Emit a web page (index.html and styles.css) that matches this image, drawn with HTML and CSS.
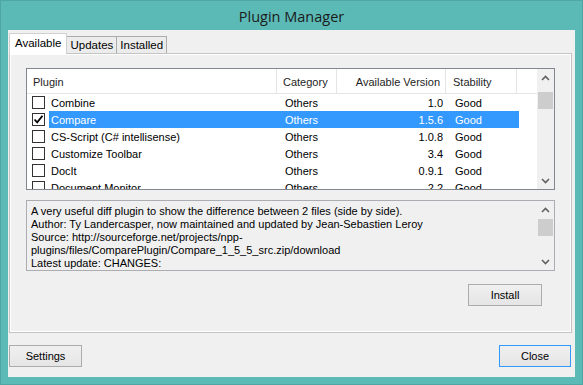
FILE: index.html
```html
<!DOCTYPE html>
<html>

<head>
    <title>Plugin Manager</title>
    <meta charset="utf-8">
    <link rel="stylesheet" href="styles.css">
</head>

<body>
    <div class="window">
        <div class="titlebar">Plugin Manager</div>

        <div class="client">
            <div class="tabs">
                <div class="tab tab-active">Available</div>
                <div class="tab">Updates</div>
                <div class="tab">Installed</div>
            </div>

            <div class="tab-page">
                <!-- plugin list -->
                <div class="listview">
                    <div class="lv-body">
                        <div class="lv-header">
                            <div class="col col-plugin">Plugin</div>
                            <div class="col col-category">Category</div>
                            <div class="col col-version">Available Version</div>
                            <div class="col col-stability">Stability</div>
                        </div>

                        <div class="lv-row">
                            <span class="check"></span>
                            <div class="row-cells">
                                <div class="cell cell-name">Combine</div>
                                <div class="cell col-category">Others</div>
                                <div class="cell col-version">1.0</div>
                                <div class="cell col-stability">Good</div>
                            </div>
                        </div>
                        <div class="lv-row selected">
                            <span class="check checked">
                                <svg width="11" height="11" viewBox="0 0 11 11"><path d="M1.5 5.5 L4.2 8.3 L9.5 1.8" fill="none" stroke="#000" stroke-width="1.8"/></svg>
                            </span>
                            <div class="row-cells">
                                <div class="cell cell-name">Compare</div>
                                <div class="cell col-category">Others</div>
                                <div class="cell col-version">1.5.6</div>
                                <div class="cell col-stability">Good</div>
                            </div>
                        </div>
                        <div class="lv-row">
                            <span class="check"></span>
                            <div class="row-cells">
                                <div class="cell cell-name">CS-Script (C# intellisense)</div>
                                <div class="cell col-category">Others</div>
                                <div class="cell col-version">1.0.8</div>
                                <div class="cell col-stability">Good</div>
                            </div>
                        </div>
                        <div class="lv-row">
                            <span class="check"></span>
                            <div class="row-cells">
                                <div class="cell cell-name">Customize Toolbar</div>
                                <div class="cell col-category">Others</div>
                                <div class="cell col-version">3.4</div>
                                <div class="cell col-stability">Good</div>
                            </div>
                        </div>
                        <div class="lv-row">
                            <span class="check"></span>
                            <div class="row-cells">
                                <div class="cell cell-name">DocIt</div>
                                <div class="cell col-category">Others</div>
                                <div class="cell col-version">0.9.1</div>
                                <div class="cell col-stability">Good</div>
                            </div>
                        </div>
                        <div class="lv-row">
                            <span class="check"></span>
                            <div class="row-cells">
                                <div class="cell cell-name">Document Monitor</div>
                                <div class="cell col-category">Others</div>
                                <div class="cell col-version">2.2</div>
                                <div class="cell col-stability">Good</div>
                            </div>
                        </div>
                    </div>

                    <div class="scrollbar">
                        <div class="sb-arrow">
                            <svg width="9" height="6" viewBox="0 0 9 6"><path d="M1 5 L4.5 1.5 L8 5" fill="none" stroke="#606060" stroke-width="1.6"/></svg>
                        </div>
                        <div class="sb-track">
                            <div class="sb-thumb list-thumb"></div>
                        </div>
                        <div class="sb-arrow">
                            <svg width="9" height="6" viewBox="0 0 9 6"><path d="M1 1 L4.5 4.5 L8 1" fill="none" stroke="#606060" stroke-width="1.6"/></svg>
                        </div>
                    </div>
                </div>

                <!-- description of selected plugin -->
                <div class="desc">
                    <div class="desc-text">
                        A very useful diff plugin to show the difference between 2 files (side by side).<br>
                        Author: Ty Landercasper, now maintained and updated by Jean-Sebastien Leroy<br>
                        Source: http://sourceforge.net/projects/npp-<br>
                        plugins/files/ComparePlugin/Compare_1_5_5_src.zip/download<br>
                        Latest update: CHANGES:
                    </div>
                    <div class="scrollbar">
                        <div class="sb-arrow">
                            <svg width="9" height="6" viewBox="0 0 9 6"><path d="M1 5 L4.5 1.5 L8 5" fill="none" stroke="#606060" stroke-width="1.6"/></svg>
                        </div>
                        <div class="sb-track">
                            <div class="sb-thumb desc-thumb"></div>
                        </div>
                        <div class="sb-arrow">
                            <svg width="9" height="6" viewBox="0 0 9 6"><path d="M1 1 L4.5 4.5 L8 1" fill="none" stroke="#606060" stroke-width="1.6"/></svg>
                        </div>
                    </div>
                </div>

                <div class="page-actions">
                    <button class="btn btn-install">Install</button>
                </div>
            </div>

            <div class="footer">
                <button class="btn btn-settings">Settings</button>
                <button class="btn btn-close">Close</button>
            </div>
        </div>
    </div>
</body>

</html>
```

FILE: styles.css
```css
/* Basic styling */
body {
    margin: 0;
    width: 583px;
    height: 385px;
    overflow: hidden;
    background-color: #5bbab6;
    font-family: "Liberation Sans", Arial, sans-serif;
    font-size: 11px;
    color: #000;
}

/* Window frame */
.window {
    display: flex;
    flex-direction: column;
    height: 385px;
    box-sizing: border-box;
    border: 1px solid #4fa7a3;
}

.titlebar {
    height: 29px;
    line-height: 31px;
    text-align: center;
    font-family: "Open Sans", "Liberation Sans", sans-serif;
    font-size: 14.5px;
    color: #1b1b1b;
}

.client {
    flex: 1;
    display: flex;
    flex-direction: column;
    margin: 0 7px 7px;
    padding: 3px 1px 0;
    background-color: #f0f0f0;
}

/* Tabs */
.tabs {
    display: flex;
    align-items: flex-end;
    height: 20px;
}

.tab {
    height: 17px;
    line-height: 16px;
    padding: 0 3px;
    margin-right: -1px;
    box-sizing: border-box;
    border: 1px solid #acacac;
    border-bottom: none;
    background-color: #ececec;
    font-size: 11.5px;
    color: #000;
}

.tab-active {
    position: relative;
    z-index: 1;
    height: 21px;
    line-height: 19px;
    margin-bottom: -1px;
    padding: 0 5px;
    border-color: #d0d0d0;
    background-color: #fff;
}

.tab-page {
    height: 280px;
    box-sizing: border-box;
    margin-right: 2px;
    padding: 14px 16px 0;
    border: 1px solid #c4c4c4;
    box-shadow: inset 1px 1px 0 #fff, inset -1px -1px 0 #fff;
    background-color: #f0f0f0;
}

/* List view */
.listview {
    display: flex;
    height: 122px;
    box-sizing: border-box;
    border: 1px solid #828790;
    background-color: #fff;
    overflow: hidden;
}

.lv-body {
    flex: 1;
    overflow: hidden;
}

.lv-header {
    display: flex;
    height: 24px;
    border-bottom: 1px solid #e5e5e5;
}

.lv-header .col {
    line-height: 27px;
    padding: 0 6px;
    box-sizing: border-box;
    border-right: 1px solid #e5e5e5;
    color: #1e1e1e;
}

.col-plugin {
    width: 250px;
}

.col-category {
    width: 60px;
}

.col-version {
    width: 109px;
    text-align: right;
}

.lv-header .col-version {
    padding-right: 5px;
}

.col-stability {
    width: 71px;
}

.lv-header .col-stability {
    padding-left: 7px;
}

.lv-row {
    display: flex;
    height: 17px;
    line-height: 18px;
}

.check {
    width: 13px;
    height: 13px;
    box-sizing: border-box;
    margin: 2px 2px 0 5px;
    border: 1px solid #333;
    background-color: #fff;
    display: flex;
    align-items: center;
    justify-content: center;
}

.row-cells {
    display: flex;
    margin-left: 2px;
}

.cell {
    box-sizing: border-box;
    white-space: nowrap;
    overflow: hidden;
}

.cell-name {
    width: 230px;
    padding-left: 2px;
}

.row-cells .col-category {
    padding-left: 6px;
}

.row-cells .col-version {
    padding-right: 5px;
}

.row-cells .col-stability {
    padding-left: 7px;
}

.lv-row.selected .row-cells {
    background-color: #3399ff;
    color: #fff;
}

/* Scroll bars */
.scrollbar {
    width: 17px;
    display: flex;
    flex-direction: column;
    background-color: #f0f0f0;
}

.sb-arrow {
    height: 17px;
    display: flex;
    align-items: center;
    justify-content: center;
}

.sb-track {
    flex: 1;
}

.sb-thumb {
    margin: 0 1px;
    background-color: #cdcdcd;
}

.list-thumb {
    height: 17px;
    margin-top: 6px;
}

.desc-thumb {
    height: 17px;
    margin-top: 1px;
}

/* Description box */
.desc {
    display: flex;
    height: 71px;
    margin-top: 10px;
    box-sizing: border-box;
    border: 1px solid #abadb3;
    background-color: #f0f0f0;
}

.desc-text {
    flex: 1;
    padding: 4px 4px 0;
    line-height: 13px;
    white-space: nowrap;
    overflow: hidden;
}

/* Buttons */
.page-actions {
    display: flex;
    justify-content: flex-end;
    margin-top: 13px;
    padding-right: 13px;
}

.btn {
    height: 22px;
    box-sizing: border-box;
    padding: 0;
    border: 1px solid #acacac;
    background: linear-gradient(#f0f0f0, #e5e5e5);
    font-family: "Liberation Sans", Arial, sans-serif;
    font-size: 11px;
    color: #000;
}

.btn-install {
    width: 74px;
}

.footer {
    display: flex;
    justify-content: space-between;
    padding: 12px 3px 0 0;
}

.btn-settings {
    width: 73px;
}

.btn-close {
    width: 72px;
    border-color: #3399ff;
}
```
